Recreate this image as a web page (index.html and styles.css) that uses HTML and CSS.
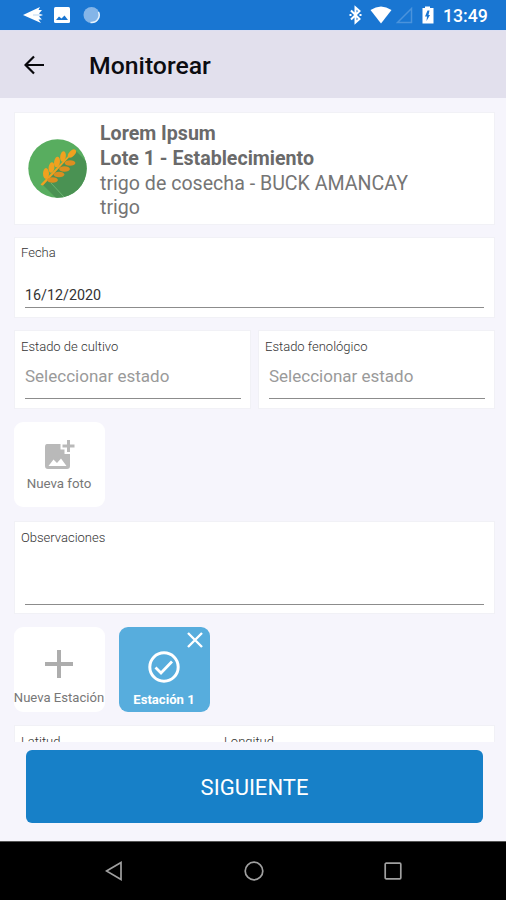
FILE: index.html
```html
<!DOCTYPE html>
<html lang="es">
<head>
<meta charset="utf-8">
<title>Monitorear</title>
<link rel="stylesheet" href="styles.css">
</head>
<body>
<div class="screen">

<div class="status">
  <svg class="status-left" width="84" height="18" viewBox="0 0 84 18">
    <path d="M0 9L17 1L15.500 4L19 4L16 7.500L20 9L16 10.500L19 13.500L15.500 13.500L18 17Z" fill="#fff"/>
    <path d="M10 9H18" stroke="#a9cbee" stroke-width=".8"/>
    <rect x="31" y="1" width="16" height="16" rx="1.500" fill="#fff"/>
    <path d="M33 14L36 10.500L38.500 12.500L41.500 9.500L45 14Z" fill="#1976d2"/>
    <circle cx="68.500" cy="9" r="8" fill="#84b5e8"/>
    <path d="M75.500 6A7.500 7.500 0 0 1 67.500 16.500" fill="none" stroke="#e8f3fc" stroke-width="1.500"/>
  </svg>
  <svg class="status-right" width="90" height="20" viewBox="0 0 90 20">
    <path d="M5 5.500L13.500 14L9.500 17.500V2.500L13.500 6L5 14.500" fill="none" stroke="#fff" stroke-width="2"/>
    <path d="M3.500 10h2M13.500 10h2" stroke="#fff" stroke-width="1.800"/>
    <path d="M24.500 5Q35 -2 45.500 5L35 18.500Z" fill="#fff"/>
    <path d="M51.500 17.500L65.500 3.500V17.500Z" fill="none" stroke="#4a93dc" stroke-width="1.500"/>
    <path d="M79 1.500h5v1.500h3.500V18.500h-11V3H79Z" fill="#fff"/>
    <path d="M81.500 5.500L79 11.500H81L80.500 16L84 10H82.500L83.500 5.500Z" fill="#1976d2"/>
  </svg>
  <span class="clock">13:49</span>
</div>

<div class="appbar">
  <svg class="back" width="20" height="20" viewBox="0 0 20 20">
    <path d="M20 10H2M10 1.500L1.500 10L10 18.500" fill="none" stroke="#08080c" stroke-width="2.200"/>
  </svg>
  <h1>Monitorear</h1>
</div>

<div class="content">
  <div class="card lot">
    <svg width="60" height="60" viewBox="0 0 60 60">
      <defs>
        <clipPath id="disc"><circle cx="29.500" cy="29.500" r="29.200"/></clipPath>
      </defs>
      <circle cx="29.500" cy="29.500" r="29.200" fill="#58ad5f"/>
      <path d="M14 45L48 12L75 39L41 72Z" fill="#4a9253" clip-path="url(#disc)"/>
      <path d="M23 44L36 58" stroke="#6bb570" clip-path="url(#disc)"/>
      <g fill="#f0a11f">
        <path d="M13 45L44 13L45 14L15 46.500Q12 46 13 45Z"/>
        <ellipse cx="18" cy="34.500" rx="3" ry="5.400"/>
        <ellipse cx="23.500" cy="28.500" rx="2.900" ry="5.400" transform="rotate(8 23.500 28.500)"/>
        <ellipse cx="29" cy="23" rx="2.900" ry="5.400" transform="rotate(8 29 23)"/>
        <ellipse cx="35" cy="17.500" rx="2.800" ry="5.400" transform="rotate(8 35 17.500)"/>
        <ellipse cx="44" cy="14.500" rx="2.800" ry="5" transform="rotate(45 44 14.500)"/>
      </g>
      <g fill="#dc8e20">
        <ellipse cx="24.500" cy="41" rx="5.400" ry="2.800"/>
        <ellipse cx="31" cy="35.500" rx="5.400" ry="2.800"/>
        <ellipse cx="36.500" cy="30" rx="5.400" ry="2.800"/>
        <ellipse cx="42" cy="24" rx="5.400" ry="2.800"/>
      </g>
    </svg>
    <div class="lot-text">
      <b class="lot-name">Lorem Ipsum</b>
      <b class="lot-place">Lote 1 - Establecimiento</b>
      <span class="lot-crop">trigo de cosecha - BUCK AMANCAY</span>
      <span class="lot-kind">trigo</span>
    </div>
  </div>

  <div class="card field date">
    <label>Fecha</label>
    <div class="input">16/12/2020</div>
  </div>

  <div class="pair">
    <div class="card field select">
      <label>Estado de cultivo</label>
      <div class="input">Seleccionar estado</div>
    </div>
    <div class="card field select">
      <label>Estado fenológico</label>
      <div class="input">Seleccionar estado</div>
    </div>
  </div>

  <div class="tiles">
    <div class="tile photo">
      <svg width="32" height="32" viewBox="0 0 32 32">
        <path d="M4 5H17.500V10.500H21.500V15H27V27Q27 30 24 30H5Q2 30 2 27V8Q2 5 4 5Z" fill="#b9b9b9"/>
        <path d="M5.500 27L10.500 20.500L14 24L18 19.500L23.500 27Z" fill="#fff"/>
        <path d="M25.500 1V13M19.500 7H31.500" stroke="#b9b9b9" stroke-width="3"/>
      </svg>
      <span>Nueva foto</span>
    </div>
  </div>

  <div class="card field notes">
    <label>Observaciones</label>
    <div class="input"></div>
  </div>

  <div class="tiles">
    <div class="tile add">
      <svg width="28" height="28" viewBox="0 0 28 28">
        <path d="M14 0V28M0 14H28" stroke="#adadad" stroke-width="4"/>
      </svg>
      <span>Nueva Estación</span>
    </div>
    <div class="tile station">
      <svg class="close" width="16" height="16" viewBox="0 0 16 16">
        <path d="M1 1L15 15M15 1L1 15" stroke="#fff" stroke-width="2.400"/>
      </svg>
      <svg width="32" height="32" viewBox="0 0 32 32">
        <circle cx="16" cy="16" r="14.200" fill="none" stroke="#fff" stroke-width="3"/>
        <path d="M7.500 16.500L13 22L24 10.500" fill="none" stroke="#fff" stroke-width="2.800"/>
      </svg>
      <span>Estación 1</span>
    </div>
  </div>

  <div class="card coords">
    <label>Latitud</label>
    <label>Longitud</label>
  </div>
</div>

<div class="footer">
  <div class="next"><span>SIGUIENTE</span></div>
</div>

<div class="nav">
  <svg width="18" height="20" viewBox="0 0 18 20"><path d="M1.500 10L16 1.500V18.500Z" fill="none" stroke="#a0a0a0" stroke-width="1.700"/></svg>
  <svg width="20" height="20" viewBox="0 0 20 20"><circle cx="10" cy="10" r="8.800" fill="none" stroke="#a0a0a0" stroke-width="1.700"/></svg>
  <svg width="18" height="18" viewBox="0 0 18 18"><rect x="1.200" y="1.200" width="15.600" height="15.600" rx="1" fill="none" stroke="#a0a0a0" stroke-width="1.700"/></svg>
</div>

</div>
</body>
</html>
```
FILE: styles.css
```css
* {box-sizing: border-box;}
body {margin: 0; font-family: Roboto, "Liberation Sans", sans-serif; background: #f6f5fc;}
svg {display: block; flex: none;}
label, span, b {white-space: nowrap;}

.screen {display: flex; flex-direction: column; width: 506px; height: 900px; overflow: hidden;}

.status {display: flex; align-items: center; height: 30px; padding: 0 19px 0 23px; background: #1976d2; color: #fff;}
.status-right {margin-left: auto;}
.clock {margin: 2px 0 0 7px; width: 44px; font-size: 17.7px; font-weight: 500; line-height: 30px;}

.appbar {display: flex; align-items: center; height: 68px; padding-left: 24px; background: #e2e0ed; border-top: 1px solid #dcdff2;}
.appbar h1 {margin: 2px 0 0 45px; font-size: 24.8px; font-weight: 500; line-height: 30px; color: #0c0c10;}

.content {display: flex; flex-direction: column; gap: 13px; height: 644px; padding: 15px 11px 0 14px; overflow: hidden;}
.content > * {flex: none;}
.card {background: #fff; border: 1px solid #f1f1f6;}

.lot {display: flex; align-items: center; height: 113px; margin-top: -1px; padding-left: 13px;}
.lot-text {display: flex; flex-direction: column; margin: 6px 0 0 12px; font-size: 19.6px; line-height: 24.8px; color: #757575;}
.lot-text b {font-weight: 700; color: #6a6a6a;}

.field {display: flex; flex-direction: column; padding: 7px 10px 0 6px;}
.field label, .coords label {font-size: 13px; line-height: 16px; font-weight: 300; color: #333;}
.field .input {margin-left: 4px; border-bottom: 1px solid #8c8c8c;}
.date {height: 81px; margin-top: -1px;}
.date .input {height: 47px; padding-top: 25px; font-size: 14.3px; line-height: 18px; color: #333;}

.pair {display: grid; grid-template-columns: 237px 237px; gap: 7px; margin-top: -1px;}
.select {height: 79px; padding-top: 8px; padding-right: 9px;}
.select .input {height: 44px; padding-top: 10px; font-size: 17px; line-height: 22px; color: #9a9a9a;}

.tiles {display: flex; gap: 14px;}
.tile {display: flex; flex-direction: column; align-items: center; width: 91px; height: 85px; border-radius: 9px; background: #fff; font-size: 13.3px; line-height: 18px; color: #777;}
.photo {padding: 17px 1px 0 0;}
.photo span {margin-top: 4px;}
.notes {height: 93px; margin-top: 1px; padding-top: 8px;}
.notes .input {height: 59px;}
.add {padding: 23px 1px 0 0;}
.add span {margin-top: 11px; font-size: 13.1px;}
.station {position: relative; padding: 24px 1px 0 0; background: #57addd; color: #fff;}
.station span {margin-top: 8px; font-size: 13.1px; font-weight: 700;}
.close {position: absolute; top: 5px; right: 7px;}

.coords {display: grid; grid-template-columns: 203px 1fr; height: 40px; padding: 8px 6px;}

.footer {height: 99px; padding: 8px 23px 0 26px;}
.next {display: flex; align-items: center; justify-content: center; height: 73px; padding-top: 2px; border-radius: 6px; background: #1780c8; font-size: 22px; color: #fff;}

.nav {display: flex; justify-content: space-between; align-items: center; height: 59px; padding: 0 104px 0 105px; background: #000; border-top: 1px solid #555;}
```
